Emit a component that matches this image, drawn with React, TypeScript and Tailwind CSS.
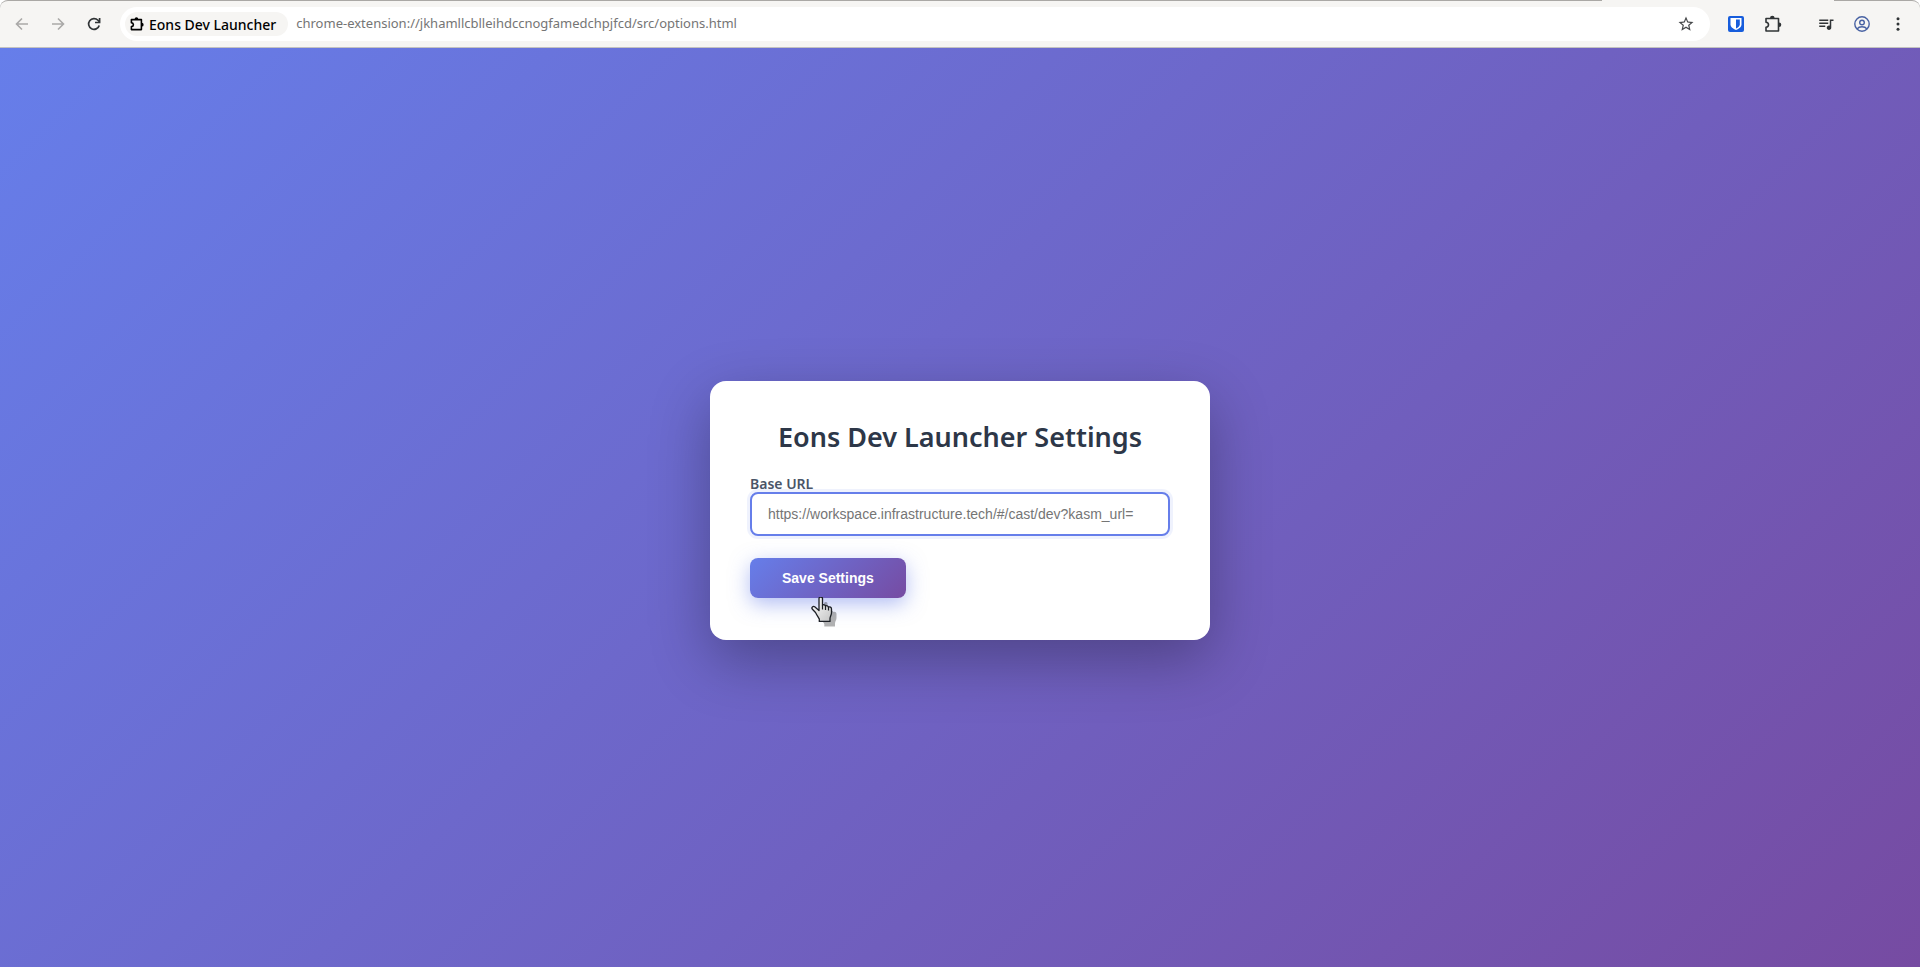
import type { ReactNode } from "react";

function Puzzle({ className }: { className: string }) {
  return (
    <svg viewBox="0 0 20 20" className={className} fill="none" aria-hidden="true">
      <path
        d="M3 4.5h12.500v12.500H3v-3.700c1.500-.2 2.500-1.100 2.500-2.500S4.500 8.500 3 8.300z"
        stroke="currentColor"
        strokeLinejoin="round"
      />
      <path d="M7 4a2.300 2.300 0 0 1 4.600 0zM16 8.500a2.300 2.300 0 0 1 0 4.600z" fill="currentColor" />
    </svg>
  );
}

function ToolButton({ label, children }: { label: string; children: ReactNode }) {
  return (
    <button type="button" aria-label={label} className="grid size-7 shrink-0 place-items-center rounded-full">
      {children}
    </button>
  );
}

function Toolbar() {
  return (
    <header className="relative flex h-12 items-center rounded-t-lg border-t border-b border-t-[#aaa8a5] border-b-[#c3c2c0] bg-[#f6f5f3] px-2 text-[#303436]">
      <div className="absolute -top-px right-[86px] h-px w-[232px] bg-[#f6f5f3]" />
      <nav aria-label="Navigation" className="flex items-center gap-2 text-[#aaa9a8]">
        <ToolButton label="Back">
          <svg viewBox="0 0 16 16" className="size-4" fill="none" stroke="currentColor" strokeWidth="1.6" aria-hidden="true">
            <path d="M14 8H3M8 2.500 2.500 8 8 13.500" />
          </svg>
        </ToolButton>
        <ToolButton label="Forward">
          <svg viewBox="0 0 16 16" className="size-4" fill="none" stroke="currentColor" strokeWidth="1.6" aria-hidden="true">
            <path d="M2 8h11M8 2.500 13.500 8 8 13.500" />
          </svg>
        </ToolButton>
        <ToolButton label="Reload">
          <svg viewBox="0 0 16 16" className="size-4 text-[#303436]" fill="none" stroke="currentColor" strokeWidth="1.7" aria-hidden="true">
            <path d="M13.200 9.400A5.400 5.400 0 1 1 12 4.300L13.600 6" />
            <path d="M13.600 2v4.500H9" />
          </svg>
        </ToolButton>
      </nav>
      <div className="ml-3 flex h-[34px] min-w-0 flex-1 items-center rounded-full bg-white pr-[15px] pl-[5px]">
        <button
          type="button"
          className="flex h-6 shrink-0 items-center gap-1 rounded-full bg-[#f6f5f3] pr-3 pl-1 text-[14px] font-medium text-black"
        >
          <Puzzle className="size-4 stroke-2" />
          Eons Dev Launcher
        </button>
        <input
          type="text"
          aria-label="Address"
          defaultValue="chrome-extension://jkhamllcblleihdccnogfamedchpjfcd/src/options.html"
          className="ml-2 min-w-0 flex-1 bg-transparent text-[13px] text-[#757575] outline-none"
        />
        <button type="button" aria-label="Bookmark this page" className="shrink-0 text-[#46484a]">
          <svg viewBox="0 0 24 24" className="size-[18px]" fill="currentColor" aria-hidden="true">
            <path d="M22 9.240l-7.190-.62L12 2 9.190 8.630 2 9.240l5.460 4.730L5.820 21 12 17.270 18.180 21l-1.630-7.030L22 9.240zM12 15.400l-3.760 2.270 1-4.280-3.320-2.880 4.380-.38L12 6.100l1.710 4.040 4.380.38-3.320 2.880 1 4.280L12 15.400z" />
          </svg>
        </button>
      </div>
      <div className="ml-3 flex items-center gap-[9px]">
        <ToolButton label="Bitwarden">
          <svg viewBox="0 0 16 16" className="size-4" aria-hidden="true">
            <rect width="16" height="16" rx="2" fill="#175ddc" />
            <path d="M2.500 2h11v6.200c0 2.800-2.500 4.400-5.500 5.900-3-1.500-5.500-3.100-5.500-5.900z" fill="#fff" />
            <path d="M8 3.500h3.800v4.700c0 1.900-1.700 3.100-3.800 4.300z" fill="#175ddc" />
          </svg>
        </ToolButton>
        <ToolButton label="Extensions">
          <Puzzle className="size-5 stroke-[1.6]" />
        </ToolButton>
      </div>
      <div className="ml-[25px] flex items-center gap-2">
        <ToolButton label="Media controls">
          <svg viewBox="0 0 24 24" className="size-[18px]" fill="currentColor" aria-hidden="true">
            <path d="M15 6H3v2h12V6zm0 4H3v2h12v-2zM3 16h8v-2H3v2zM17 6v8.180c-.31-.11-.65-.18-1-.18-1.660 0-3 1.340-3 3s1.340 3 3 3 3-1.340 3-3V8h3V6h-5z" />
          </svg>
        </ToolButton>
        <ToolButton label="Profile">
          <svg viewBox="0 0 16 16" className="size-4 text-[#4862a3]" fill="none" stroke="currentColor" strokeWidth="1.4" aria-hidden="true">
            <circle cx="8" cy="8" r="7.2" />
            <circle cx="8" cy="6.5" r="2.3" />
            <path d="M3 13c1.300-1.600 3-2.200 5-2.200s3.700.6 5 2.200" />
          </svg>
        </ToolButton>
        <ToolButton label="Menu">
          <svg viewBox="0 0 16 16" className="size-4" fill="currentColor" aria-hidden="true">
            <circle cx="8" cy="2.7" r="1.5" />
            <circle cx="8" cy="8" r="1.5" />
            <circle cx="8" cy="13.3" r="1.5" />
          </svg>
        </ToolButton>
      </div>
    </header>
  );
}

function HandCursor() {
  const hand =
    "M8 1.500c0-2 3.500-2 3.500 0v6.700c1-.9 2.700-.5 3 .8 1.100-.7 2.600-.2 2.900 1 1.500-.6 3.100.3 3.100 1.900v4c0 2-1.500 3.500-1.500 5.500v3H8.300v-2.500C6.500 19 5.500 17.500 4.500 15.500L1.200 12c-1-1.600.8-3.200 2.500-2.200L8 13.500z";
  return (
    <svg viewBox="0 0 28 32" className="pointer-events-none absolute top-[39px] left-[61px] h-8 w-7" aria-hidden="true">
      <defs>
        <linearGradient id="hand-fill" x1="0" y1="0" x2="1" y2="1">
          <stop offset="0" stopColor="#ffffff" />
          <stop offset="1" stopColor="#c4c4c4" />
        </linearGradient>
      </defs>
      <path d={hand} transform="translate(5 5)" fill="#000" fillOpacity="0.3" />
      <path d={hand} fill="url(#hand-fill)" stroke="#1b1e24" strokeWidth="1.3" strokeLinejoin="round" />
      <path d="M11.500 8v4.500M14.500 9v4M17.500 10v3.500" stroke="#1b1e24" strokeWidth="1.2" />
    </svg>
  );
}

export default function App() {
  return (
    <div className="flex min-h-screen flex-col bg-white font-['Noto_Sans','Open_Sans',sans-serif]">
      <Toolbar />
      <main className="flex flex-1 items-center justify-center bg-[linear-gradient(135deg,#667eea_0%,#764ba2_100%)] px-5 pt-1.5">
        <form
          className="w-full max-w-[500px] rounded-2xl bg-white px-10 pt-10 pb-[42px] shadow-[0_20px_60px_rgba(0,0,0,0.3)]"
          onSubmit={(event) => event.preventDefault()}
        >
          <h1 className="text-center text-[27px] leading-8 font-semibold text-[#2d3748]">Eons Dev Launcher Settings</h1>
          <label htmlFor="base-url" className="mt-[23px] block text-[14px] leading-4 font-semibold text-[#4a5568]">
            Base URL
          </label>
          <input
            id="base-url"
            type="text"
            placeholder="https://workspace.infrastructure.tech/#/cast/dev?kasm_url="
            className="block h-11 w-full rounded-lg border-2 border-[#667eea] bg-white px-4 font-['Liberation_Sans',Arial,sans-serif] text-[14px] text-[#2d3748] shadow-[0_0_0_3px_rgba(102,126,234,0.1)] outline-none placeholder:text-[#757575]"
          />
          <div className="relative mt-[22px] w-fit">
            <button
              type="submit"
              className="block h-10 rounded-lg bg-[linear-gradient(135deg,#667eea_0%,#764ba2_100%)] px-8 font-['Liberation_Sans',Arial,sans-serif] text-[14px] font-semibold text-white shadow-[0_6px_20px_rgba(102,126,234,0.5)]"
            >
              Save Settings
            </button>
            <HandCursor />
          </div>
        </form>
      </main>
    </div>
  );
}
